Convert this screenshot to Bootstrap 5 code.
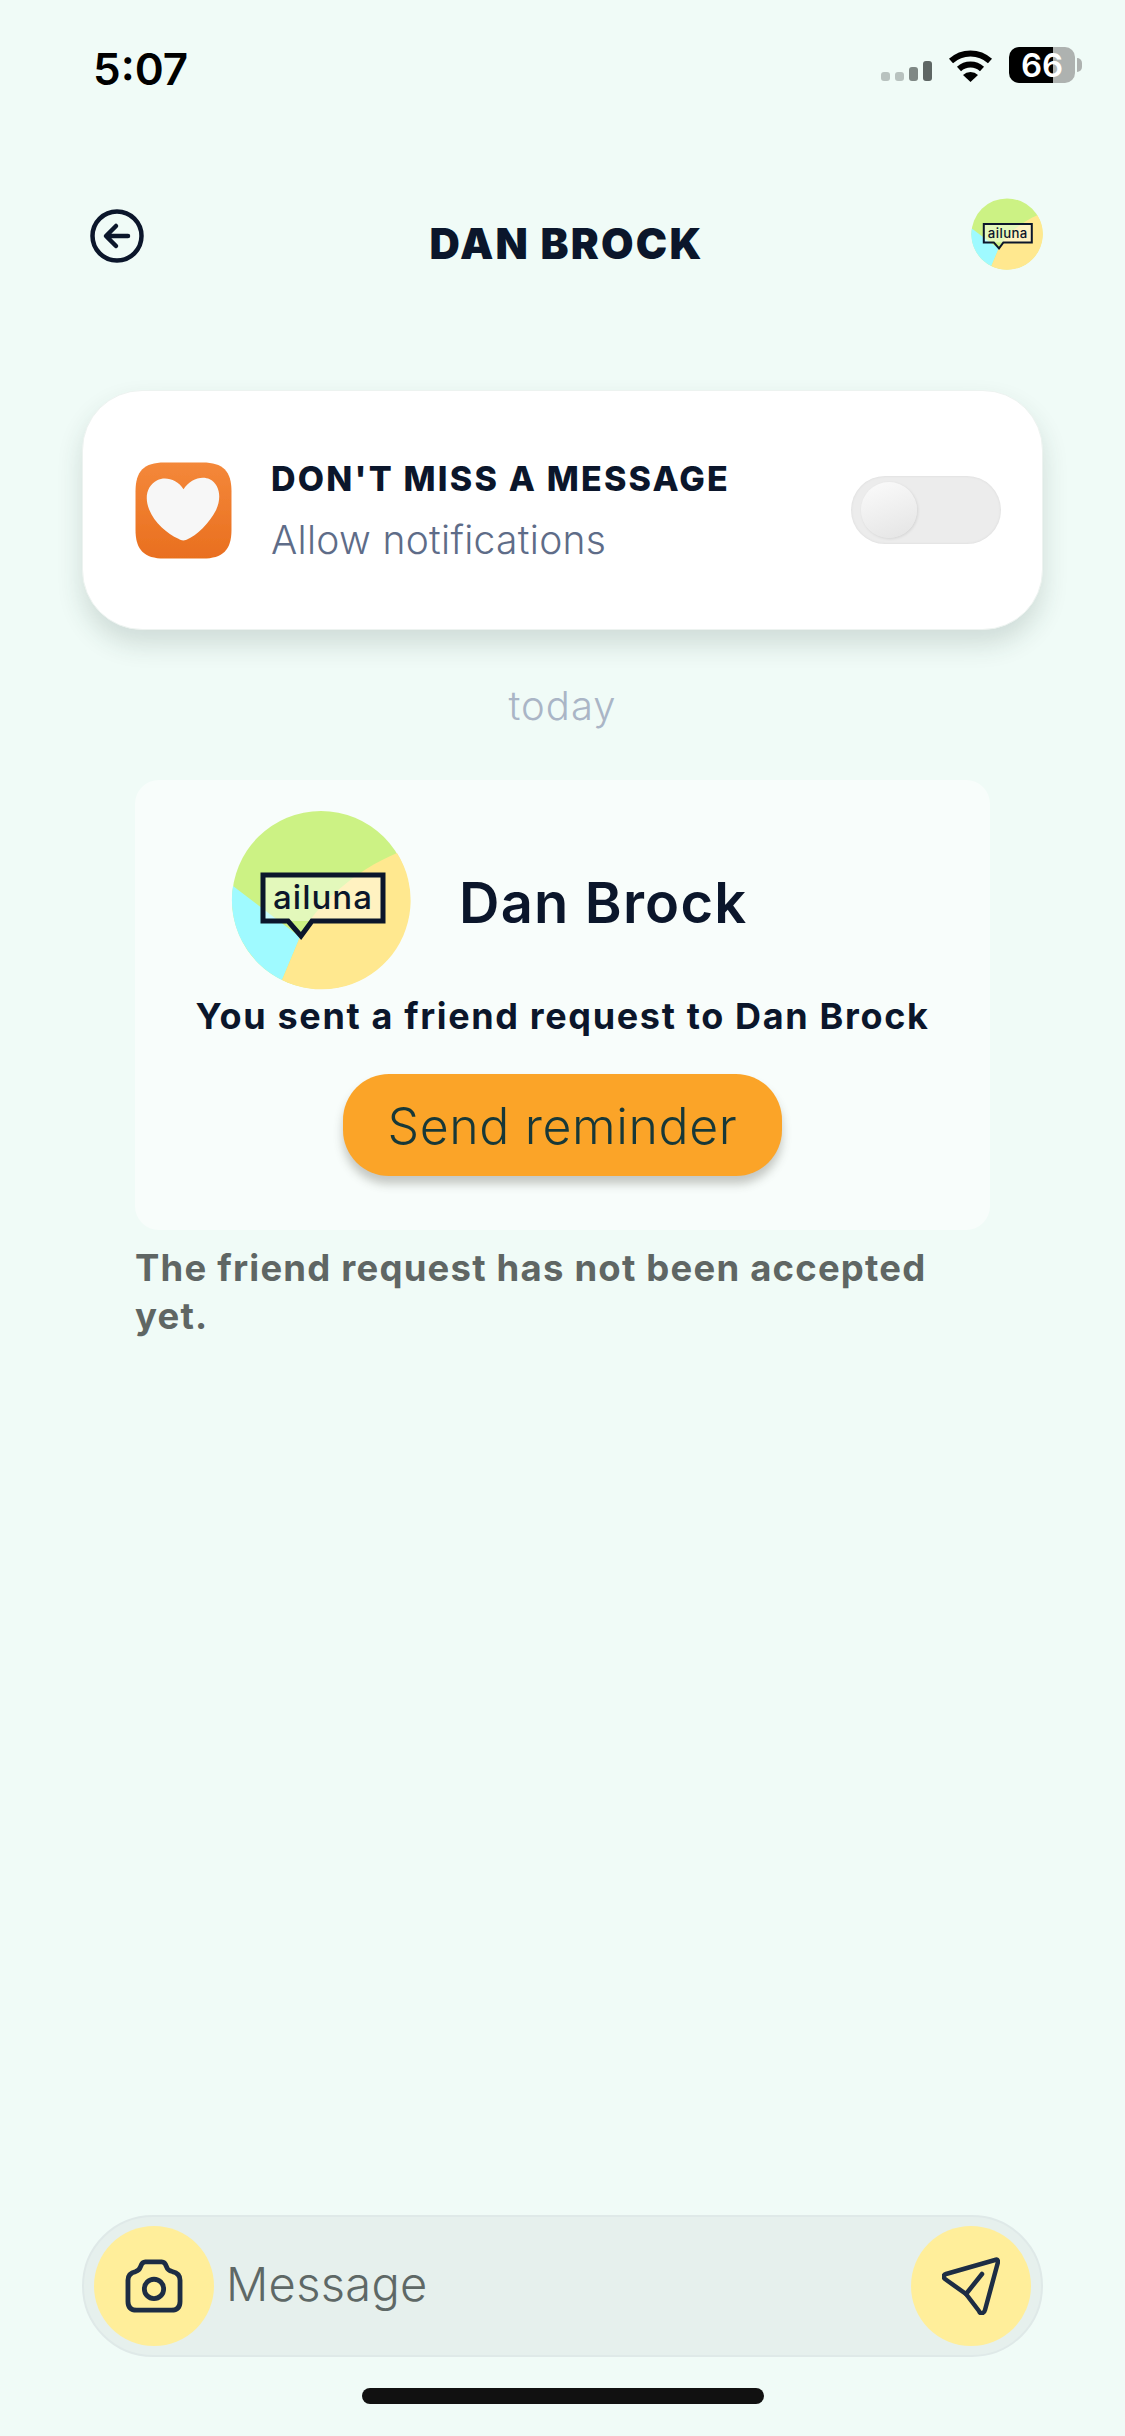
<!DOCTYPE html>
<html lang="en">
<head>
    <meta charset="UTF-8">
    <meta name="viewport" content="width=device-width, initial-scale=1.0">
    <title>Dan Brock</title>
    <link rel="stylesheet" href="https://cdn.jsdelivr.net/npm/bootstrap@5.3.0/dist/css/bootstrap.min.css">
    <style>
        html, body { height: 2436px; }
        body { background: #f0fbf7; font-family: Inter, "Liberation Sans", sans-serif; color: #0b162b; overflow: hidden; }
        .phone { width: 1125px; height: 2436px; }

        .status-row { height: 135px; padding: 47px 43px 0 93px; }
        .clock { font-size: 44px; font-weight: 600; line-height: 44px; color: #000; }
        .signal { gap: 5px; margin-right: 16px; margin-top: 12px; }
        .signal i { display: block; width: 9px; border-radius: 3px; }
        .sig-a { height: 9px; background: #b8c2bf; }
        .sig-b { height: 14px; background: #7f8885; }
        .sig-c { height: 20px; background: #5e6664; }
        .wifi { width: 45px; height: 33px; margin-right: 16px; }
        .battery { width: 66px; height: 36px; border-radius: 10px; background: linear-gradient(90deg, #000 67%, #aeb2b0 67%); color: #fff; font-size: 33px; font-weight: 600; line-height: 36px; text-align: center; }
        .battery-nub { width: 5px; height: 14px; border-radius: 0 5px 5px 0; background: #aeb2b0; margin-left: 2px; }

        .top-head { display: grid; grid-template-columns: 1fr auto 1fr; height: 72px; margin-top: 63px; padding: 0 82px 0 90px; }
        .back-icon { width: 54px; height: 54px; margin-top: 11px; }
        .head-name { font-size: 42px; font-weight: 900; line-height: 40px; margin: 26px 0 0; letter-spacing: 2.2px; }
        .avatar-sm { width: 72px; height: 72px; }

        .notify-card { width: 961px; height: 240px; margin: 120px 0 0 82px; padding: 0 41px 0 51px; background: #fff; border-radius: 60px; box-shadow: 0 14px 26px rgba(40, 60, 55, .16); border: 1px solid #edf3f0; }
        .heart-box { width: 99px; height: 99px; margin-right: 38px; }
        .notify-title { font-size: 34px; font-weight: 800; line-height: 40px; letter-spacing: 2.2px; }
        .notify-sub { font-size: 39px; font-weight: 300; line-height: 44px; letter-spacing: .3px; color: #5e6c88; margin-top: 19px; }
        .toggle-track { width: 150px; height: 68px; border-radius: 34px; background: #ececec; padding: 0 0 0 10px; box-shadow: inset 0 0 3px rgba(0, 0, 0, .08); }
        .toggle-knob { width: 56px; height: 56px; border-radius: 50%; background: linear-gradient(160deg, #fbfbfb, #e4e4e4); box-shadow: 1px 1px 3px rgba(0, 0, 0, .1); }

        .day-label { font-size: 40px; font-weight: 300; line-height: 46px; letter-spacing: 1px; color: #aab5c6; margin-top: 53px; }

        .msg-box { width: 855px; height: 450px; margin: 51px 0 0 135px; padding-top: 30px; background: #f8fdfb; border-radius: 24px; }
        .msg-person { padding-left: 96px; height: 180px; }
        .avatar-lg { width: 180px; height: 180px; margin-right: 48px; }
        .person-name { font-size: 56px; font-weight: 600; letter-spacing: 1.2px; padding-top: 6px; }
        .msg-text { font-size: 36px; font-weight: 700; line-height: 44px; letter-spacing: 1.65px; margin-top: 4px; }
        .remind-btn { width: 439px; height: 102px; margin-top: 36px; padding: 3px 0 0; border: 0; border-radius: 46px; background: #fba428; color: #173838; font-size: 50px; font-weight: 300; letter-spacing: .6px; box-shadow: 0 8px 10px rgba(60, 60, 50, .28); }
        .remind-btn:hover { background: #fba428; color: #173838; }
        .pending-text { width: 855px; margin: 14px 0 0 135px; font-size: 36.5px; font-weight: 700; line-height: 48px; letter-spacing: 1.2px; color: #5f6664; }

        .composer { width: 961px; height: 142px; margin: auto 0 0 82px; padding: 0 10px; background: #e6f0ed; border: 2px solid #dfe9e8; border-radius: 71px; }
        .round-btn { width: 120px; height: 120px; padding: 0; border: 0; border-radius: 50%; background: #ffee9a; }
        .msg-input, .msg-input:focus { background: transparent; border: 0; box-shadow: none; padding: 0 0 4px 12px; font-size: 47px; font-weight: 300; letter-spacing: .3px; color: #5e6866; }
        .msg-input::placeholder { color: #5e6866; opacity: 1; }
        .home-bar { width: 402px; height: 16px; margin: 31px auto 32px; border-radius: 8px; background: #111; }
    </style>
</head>
<body>
    <div class="phone d-flex flex-column">
        <div class="status-row d-flex justify-content-between align-items-start">
            <div class="clock">5:07</div>
            <div class="d-flex align-items-center">
                <div class="signal d-flex align-items-end">
                    <i class="sig-a"></i><i class="sig-a"></i><i class="sig-b"></i><i class="sig-c"></i>
                </div>
                <svg class="wifi" viewBox="0 0 45 33">
                    <path d="M3 12 A29 29 0 0 1 42 12" fill="none" stroke="#000" stroke-width="6"/>
                    <path d="M11 20 A17 17 0 0 1 34 20" fill="none" stroke="#000" stroke-width="6"/>
                    <path d="M15 26 A11 11 0 0 1 30 26 L22.5 33 Z" fill="#000"/>
                </svg>
                <div class="battery">66</div>
                <div class="battery-nub"></div>
            </div>
        </div>

        <div class="top-head">
            <div>
                <svg class="back-icon d-block" viewBox="0 0 54 54" fill="none" stroke="#0b162b" stroke-width="4.5" stroke-linecap="round" stroke-linejoin="round">
                    <circle cx="27" cy="27" r="24.5"/>
                    <path d="M26 17 L16 27 L26 37 M17 27 H38"/>
                </svg>
            </div>
            <h1 class="head-name">DAN BROCK</h1>
            <div class="d-flex justify-content-end">
                <svg class="avatar-sm" viewBox="0 0 180 180">
                    <circle cx="90" cy="90" r="89" fill="#ccf284"/>
                    <path d="M69 127 L2 76 A89 89 0 0 0 51 170 Z" fill="#9ffaff"/>
                    <path d="M69 127 C84 95 125 60 166 43 A89 89 0 0 1 51 170 Z" fill="#ffe88f"/>
                    <rect x="32" y="65" width="120" height="46" fill="#fff" fill-opacity=".45"/>
                    <path d="M32 65 H152 V111 H81 L70 126 L57 111 H32 Z" fill="none" stroke="#0b162b" stroke-width="5"/>
                    <text x="92" y="99" text-anchor="middle" font-family="Inter, sans-serif" font-size="33" font-weight="500" letter-spacing="1" fill="#0b162b">ailuna</text>
                </svg>
            </div>
        </div>

        <div class="notify-card d-flex align-items-center">
            <svg class="heart-box flex-shrink-0" viewBox="0 0 98 98">
                <defs>
                    <linearGradient id="orangeFill" x1="0" y1="0" x2="0" y2="1">
                        <stop offset="0" stop-color="#f4883a"/>
                        <stop offset="1" stop-color="#e96f1f"/>
                    </linearGradient>
                    <filter id="softEdge"><feGaussianBlur stdDeviation=".7"/></filter>
                </defs>
                <path d="M30 1.5 H68 C88 1.5 96.500 10 96.500 30 V68 C96.500 88 88 96.500 68 96.500 H30 C10 96.500 1.500 88 1.500 68 V30 C1.500 10 10 1.500 30 1.500 Z" fill="url(#orangeFill)" filter="url(#softEdge)"/>
                <path d="M49 28 C55 18 67 14 75 18 C85 23 87 37 81 49 C75 61 62 74 52 78 C49 79 47 79 44 77 C33 72 20 61 15 48 C10 36 13 24 23 19 C31 15 43 18 49 28 Z" fill="#f7f7f7"/>
            </svg>
            <div class="flex-grow-1">
                <div class="notify-title">DON'T MISS A MESSAGE</div>
                <div class="notify-sub">Allow notifications</div>
            </div>
            <div class="toggle-track d-flex align-items-center">
                <div class="toggle-knob"></div>
            </div>
        </div>

        <div class="day-label text-center">today</div>

        <div class="msg-box">
            <div class="msg-person d-flex align-items-center">
                <svg class="avatar-lg flex-shrink-0" viewBox="0 0 180 180">
                    <circle cx="90" cy="90" r="89" fill="#ccf284"/>
                    <path d="M69 127 L2 76 A89 89 0 0 0 51 170 Z" fill="#9ffaff"/>
                    <path d="M69 127 C84 95 125 60 166 43 A89 89 0 0 1 51 170 Z" fill="#ffe88f"/>
                    <rect x="32" y="65" width="120" height="46" fill="#fff" fill-opacity=".45"/>
                    <path d="M32 65 H152 V111 H81 L70 126 L57 111 H32 Z" fill="none" stroke="#0b162b" stroke-width="5"/>
                    <text x="92" y="99" text-anchor="middle" font-family="Inter, sans-serif" font-size="33" font-weight="500" letter-spacing="1" fill="#0b162b">ailuna</text>
                </svg>
                <div class="person-name">Dan Brock</div>
            </div>
            <div class="msg-text text-center">You sent a friend request to Dan Brock</div>
            <div class="text-center">
                <button type="button" class="btn remind-btn">Send reminder</button>
            </div>
        </div>
        <div class="pending-text">The friend request has not been accepted yet.</div>

        <div class="composer d-flex align-items-center">
            <button type="button" class="btn round-btn d-flex align-items-center justify-content-center flex-shrink-0" aria-label="Camera">
                <svg width="58" height="54" viewBox="0 0 60 56" fill="none" stroke="#1d2d44" stroke-width="5" stroke-linecap="round" stroke-linejoin="round">
                    <path d="M21 3 H38 C41 3 42 5 43 8 C44 11 45 12 49 13 C54 14 57 17 57 22 V44 C57 50 54 53 48 53 H12 C6 53 3 50 3 44 V22 C3 17 6 14 11 13 C14 12 15 11 16 8 C17 5 18 3 21 3 Z"/>
                    <circle cx="30" cy="31" r="10"/>
                </svg>
            </button>
            <input type="text" class="form-control msg-input" placeholder="Message" aria-label="Message">
            <button type="button" class="btn round-btn d-flex align-items-center justify-content-center flex-shrink-0" aria-label="Send">
                <svg width="58" height="58" viewBox="0 0 58 58" fill="none" stroke="#1d2d44" stroke-width="4.5" stroke-linecap="round" stroke-linejoin="round">
                    <path d="M53 3 C55 2 56 3 56 5 L43 53 C42 57 38 57 37 54 L24 37 L3 22 C1 20 1 18 4 17 Z"/>
                    <path d="M24 37 L40 17"/>
                </svg>
            </button>
        </div>
        <div class="home-bar"></div>
    </div>
    <script src="https://cdn.jsdelivr.net/npm/bootstrap@5.3.0/dist/js/bootstrap.bundle.min.js"></script>
</body>
</html>
